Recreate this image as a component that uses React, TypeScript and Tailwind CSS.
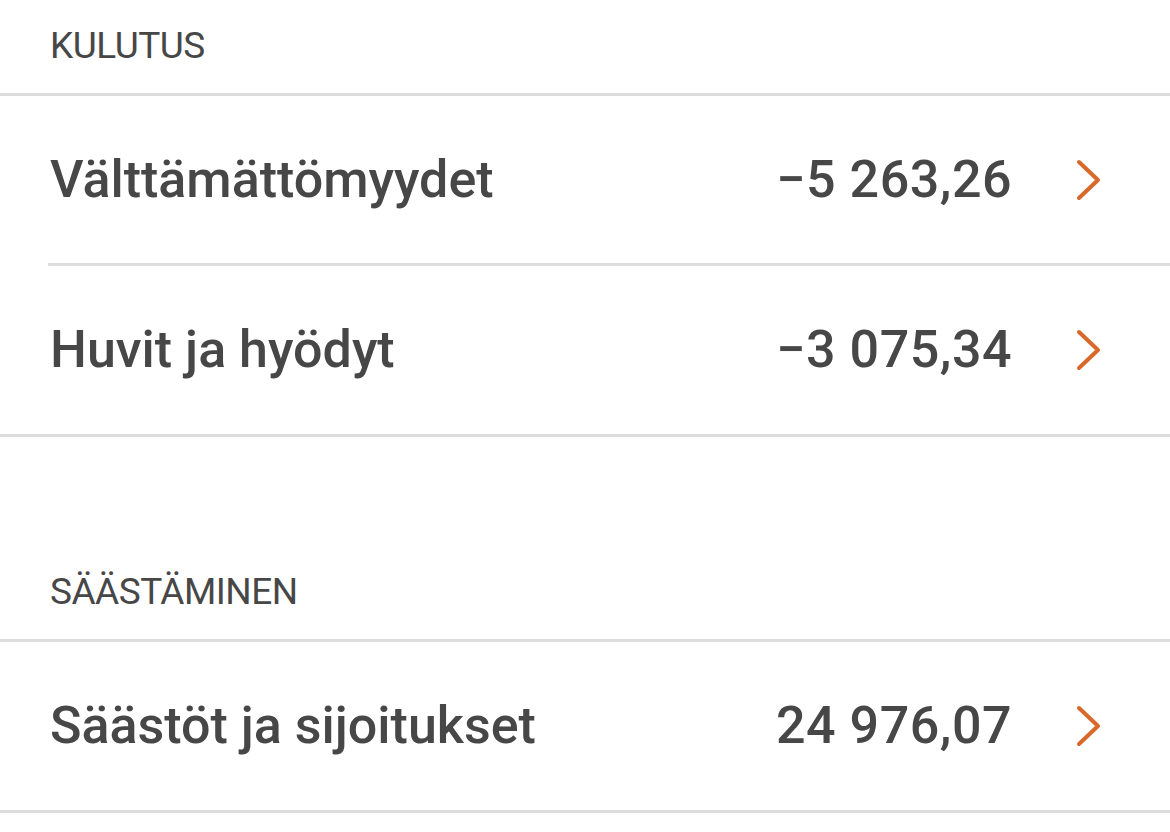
type Row = { label: string; amount: string };

const groups: { title: string; rows: Row[] }[] = [
  {
    title: "KULUTUS",
    rows: [
      { label: "Välttämättömyydet", amount: "−5 263,26" },
      { label: "Huvit ja hyödyt", amount: "−3 075,34" },
    ],
  },
  {
    title: "SÄÄSTÄMINEN",
    rows: [{ label: "Säästöt ja sijoitukset", amount: "24 976,07" }],
  },
];

function Chevron() {
  return (
    <svg width="26" height="42" viewBox="0 0 26 42" fill="none" className="shrink-0">
      <path d="M3 3 L22 21 L3 39" stroke="#d9682b" strokeWidth="4" strokeLinecap="round" strokeLinejoin="round" />
    </svg>
  );
}

export default function App() {
  return (
    <div className="w-full min-h-screen bg-white text-[#474747]" style={{ fontFamily: "Roboto, 'Noto Sans', sans-serif" }}>
      {groups.map((group, gi) => (
        <div key={group.title} className={gi > 0 ? "mt-[109px]" : ""}>
          {/* otsikko */}
          <div className="h-[96px] px-[50px] pb-[2px] flex items-center border-b-[3px] border-[#dcdcdc]">
            <span className="text-[37px] leading-none tracking-[-0.5px]">{group.title}</span>
          </div>
          {group.rows.map((row, ri) => {
            const last = ri === group.rows.length - 1;
            return (
              <div key={row.label} className={last ? "border-b-[3px] border-[#dcdcdc]" : ""}>
                <div
                  className={`ml-[48px] flex items-center pr-[68px] ${
                    last ? "h-[168px]" : "h-[170px] border-b-[3px] border-[#dcdcdc]"
                  }`}
                >
                  <span className="pl-[2px] text-[52px] font-medium leading-none flex-1">{row.label}</span>
                  <span className="text-[52px] font-medium leading-none mr-[64px] tracking-[0.5px]">{row.amount}</span>
                  <Chevron />
                </div>
              </div>
            );
          })}
        </div>
      ))}
    </div>
  );
}
